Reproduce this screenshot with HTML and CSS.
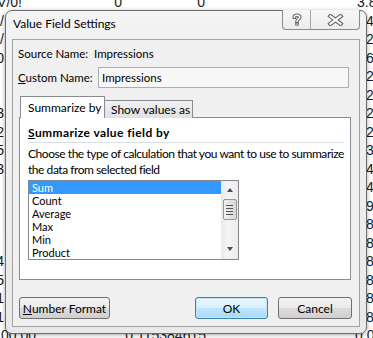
FILE: index.html
```html
<!DOCTYPE html>
<html>
  <head>
    <title>Value Field Settings</title>
    <link rel="stylesheet" href="styles.css">
  </head>
  <body>
    <!-- Spreadsheet behind the dialog (only the visible edges hold values) -->
    <div class="sheet">
      <div class="sheet-row first"><span class="c1">#DIV/0!</span><span class="c2">0</span><span class="c3">0</span><span class="c4">3.846153846</span></div>
      <div class="sheet-row"><span class="c1">/</span><span class="c2"></span><span class="c3"></span><span class="c4">4.1</span></div>
      <div class="sheet-row"><span class="c1">/</span><span class="c2"></span><span class="c3"></span><span class="c4">2.5</span></div>
      <div class="sheet-row"><span class="c1">0</span><span class="c2"></span><span class="c3"></span><span class="c4">6.2</span></div>
      <div class="sheet-row"><span class="c1"></span><span class="c2"></span><span class="c3"></span><span class="c4">2.3</span></div>
      <div class="sheet-row"><span class="c1"></span><span class="c2"></span><span class="c3"></span><span class="c4">2.1</span></div>
      <div class="sheet-row"><span class="c1">3</span><span class="c2"></span><span class="c3"></span><span class="c4">2.7</span></div>
      <div class="sheet-row"><span class="c1">2</span><span class="c2"></span><span class="c3"></span><span class="c4">2.9</span></div>
      <div class="sheet-row"><span class="c1">5</span><span class="c2"></span><span class="c3"></span><span class="c4">3.4</span></div>
      <div class="sheet-row"><span class="c1">3</span><span class="c2"></span><span class="c3"></span><span class="c4">4.6</span></div>
      <div class="sheet-row"><span class="c1"></span><span class="c2"></span><span class="c3"></span><span class="c4">4.2</span></div>
      <div class="sheet-row"><span class="c1"></span><span class="c2"></span><span class="c3"></span><span class="c4">9.1</span></div>
      <div class="sheet-row"><span class="c1"></span><span class="c2"></span><span class="c3"></span><span class="c4">8.3</span></div>
      <div class="sheet-row"><span class="c1"></span><span class="c2"></span><span class="c3"></span><span class="c4">8.5</span></div>
      <div class="sheet-row"><span class="c1">4</span><span class="c2"></span><span class="c3"></span><span class="c4">8.8</span></div>
      <div class="sheet-row"><span class="c1">5</span><span class="c2"></span><span class="c3"></span><span class="c4">8.0</span></div>
      <div class="sheet-row"><span class="c1">1</span><span class="c2"></span><span class="c3"></span><span class="c4">8.6</span></div>
      <div class="sheet-row"><span class="c1">1</span><span class="c2"></span><span class="c3"></span><span class="c4">8.2</span></div>
      <div class="sheet-row last"><span class="c1">00.00</span><span class="c2"></span><span class="c3">0.115384615</span><span class="c4">0.0</span></div>
    </div>

    <!-- The dialog -->
    <div class="dialog">
      <div class="titlebar">
        <span class="title">Value Field Settings</span>
        <div class="caption-btns">
          <span class="cbtn help">
            <svg width="10" height="13" viewBox="0 0 10 13">
              <path d="M2.3 4.2 C2.3 1.6 7.7 1.6 7.7 4.2 C7.7 6.2 5 6 5 8.4" fill="none" stroke="#6a6a6a" stroke-width="3.6" stroke-linecap="square"/>
              <rect x="3.2" y="9.6" width="3.6" height="3" fill="#6a6a6a"/>
              <path d="M2.3 4.2 C2.3 1.6 7.7 1.6 7.7 4.2 C7.7 6.2 5 6 5 8.4" fill="none" stroke="#ffffff" stroke-width="1.4" stroke-linecap="square"/>
              <rect x="4.3" y="10.6" width="1.4" height="1" fill="#ffffff"/>
            </svg>
          </span>
          <span class="cbtn close">
            <svg width="17" height="12" viewBox="0 0 17 12">
              <path d="M3.5 2.2 L13.5 9.8 M13.5 2.2 L3.5 9.8" stroke="#6a6a6a" stroke-width="4.4" stroke-linecap="square"/>
              <path d="M3.5 2.2 L13.5 9.8 M13.5 2.2 L3.5 9.8" stroke="#ffffff" stroke-width="2" stroke-linecap="square"/>
            </svg>
          </span>
        </div>
      </div>

      <div class="client">
        <div class="field-row source">
          <span class="lbl">Source Name:</span>
          <span>Impressions</span>
        </div>
        <div class="field-row custom">
          <label for="custom-name" class="lbl"><u>C</u>ustom Name:</label>
          <input type="text" id="custom-name" value="Impressions" />
        </div>

        <div class="tabs">
          <div class="tab active">Summarize by</div>
          <div class="tab">Show values as</div>
        </div>
        <div class="panel">
          <div class="heading"><u>S</u>ummarize value field by</div>
          <p class="desc">Choose the type of calculation that you want to use to summarize<br>the data from selected field</p>
          <div class="listbox">
            <ul class="items">
              <li class="selected">Sum</li>
              <li>Count</li>
              <li>Average</li>
              <li>Max</li>
              <li>Min</li>
              <li>Product</li>
            </ul>
            <div class="scrollbar">
              <span class="arrow up"></span>
              <span class="thumb"><i></i><i></i><i></i><i></i></span>
              <span class="track"></span>
              <span class="arrow down"></span>
            </div>
          </div>
        </div>

        <div class="buttons">
          <button class="btn number-format"><u>N</u>umber Format</button>
          <span class="spacer"></span>
          <button class="btn ok">OK</button>
          <button class="btn cancel">Cancel</button>
        </div>
      </div>
    </div>
  </body>
</html>
```

FILE: styles.css
```css
/* Page */
body {
  margin: 0;
  width: 373px;
  height: 338px;
  overflow: hidden;
  position: relative;
  background: #ffffff;
  font-family: Lato, "Open Sans", sans-serif;
  font-size: 12px;
  color: #000000;
}

/* Spreadsheet in the background */
.sheet {
  font-family: "Liberation Sans", Arial, sans-serif;
  font-size: 14px;
  color: #1a1a1a;
  margin-top: -7px;
}

.sheet-row {
  display: grid;
  grid-template-columns: 4px 112px 93px 1fr;
  height: 18.5px;
  line-height: 18.5px;
  white-space: nowrap;
}

.sheet-row.first {
  grid-template-columns: 22px 100px 83px 1fr;
}

.sheet-row .c1,
.sheet-row .c2,
.sheet-row .c3 {
  display: flex;
  justify-content: flex-end;
  min-width: 0;
}

.sheet-row .c4 {
  padding-left: 157px;
}

.sheet-row.first .c4 {
  padding-left: 152px;
}

.sheet-row.last {
  grid-template-columns: 36px 60px 110px 1fr;
}

.sheet-row.last .c4 {
  padding-left: 149px;
}

/* Dialog frame */
.dialog {
  position: absolute;
  left: 5px;
  top: 10px;
  width: 362px;
  height: 324px;
  box-sizing: border-box;
  border: 1px solid #6b6b6b;
  border-radius: 7px;
  background: linear-gradient(#f3f3f3, #e9e9e9);
  box-shadow: 0 1px 4px rgba(0, 0, 0, 0.35);
  display: flex;
  flex-direction: column;
  padding: 0 6px 6px 6px;
}

.titlebar {
  height: 28px;
  display: flex;
  justify-content: space-between;
  align-items: flex-start;
}

.title {
  padding-left: 1px;
  margin-top: 3px;
  font-size: 12px;
  line-height: 20px;
}

/* Help and close buttons */
.caption-btns {
  display: flex;
  margin-top: -1px;
  height: 19px;
  border: 1px solid #8a8a8a;
  border-top: none;
  border-radius: 0 0 4px 4px;
  background: linear-gradient(#f7f7f7, #ececec);
}

.cbtn {
  display: flex;
  align-items: center;
  justify-content: center;
}

.cbtn.help {
  width: 27px;
  border-right: 1px solid #a8a8a8;
}

.cbtn.close {
  width: 48px;
}

/* Client area */
.client {
  flex: 1;
  border: 1px solid #a3a3a3;
  background: #f0f0f0;
  padding: 6px 0 0 5px;
  display: flex;
  flex-direction: column;
}

.field-row {
  display: flex;
  align-items: center;
  height: 16px;
  line-height: 16px;
  font-size: 11.5px;
  white-space: nowrap;
}

.field-row .lbl {
  width: 76px;
}

.field-row.custom {
  margin-top: 5px;
  height: 21px;
}

.field-row.custom .lbl {
  width: 80px;
}

.field-row input {
  width: 251px;
  height: 21px;
  box-sizing: border-box;
  border: 1px solid #abadb3;
  background: #f7f7f7;
  font-family: inherit;
  font-size: 11.5px;
  padding: 0 3px;
  margin: 0;
}

/* Tabs */
.tabs {
  display: flex;
  align-items: flex-end;
  margin-top: 8px;
  margin-left: 2px;
  height: 22px;
  position: relative;
  z-index: 1;
  white-space: nowrap;
}

.tab {
  box-sizing: border-box;
  border: 1px solid #898c95;
  border-bottom: none;
  line-height: 17px;
  height: 18px;
  padding: 0 6px;
  background: linear-gradient(#f2f2f2, #e0e0e0);
}

.tab.active {
  height: 22px;
  line-height: 21px;
  width: 85px;
  padding-left: 7px;
  background: #ffffff;
}

.tab + .tab {
  border-left: none;
  width: 88px;
}

.panel {
  margin-top: -1px;
  margin-left: 1px;
  width: 332px;
  height: 163px;
  box-sizing: border-box;
  border: 1px solid #898c95;
  background: #ffffff;
  padding: 7px 6px 0 8px;
}

.heading {
  font-weight: bold;
  letter-spacing: 0.4px;
  line-height: 16px;
  padding-bottom: 1px;
  border-bottom: 1px solid #d5dfe5;
}

.desc {
  margin: 3px 0 0 0;
  line-height: 16px;
  letter-spacing: -0.45px;
  white-space: nowrap;
}

/* List box with scroll bar */
.listbox {
  margin-top: 2px;
  width: 211px;
  height: 80px;
  box-sizing: border-box;
  border: 1px solid #828790;
  display: flex;
}

.items {
  flex: 1;
  list-style: none;
  margin: 0;
  padding: 0;
  font-size: 11px;
}

.items li {
  height: 13px;
  line-height: 13px;
  padding-left: 3px;
}

.items li.selected {
  background: #3399ff;
  color: #ffffff;
}

.scrollbar {
  width: 17px;
  display: flex;
  flex-direction: column;
  align-items: center;
  background: linear-gradient(90deg, #e8e8e8, #f5f5f5 40%, #ececec);
}

.arrow {
  width: 0;
  height: 0;
  border-left: 3.5px solid transparent;
  border-right: 3.5px solid transparent;
}

.arrow.up {
  margin-top: 7px;
  border-bottom: 4px solid #4d4d4d;
}

.arrow.down {
  margin-bottom: 8px;
  border-top: 4px solid #4d4d4d;
}

.thumb {
  margin-top: 7px;
  width: 14px;
  height: 21px;
  box-sizing: border-box;
  border: 1px solid #979797;
  border-radius: 2px;
  background: linear-gradient(90deg, #f2f2f2, #e3e3e3 50%, #d6d6d6);
  display: flex;
  flex-direction: column;
  align-items: center;
  justify-content: center;
  gap: 2px;
}

.thumb i {
  display: block;
  width: 7px;
  height: 1px;
  background: #555555;
}

.track {
  flex: 1;
}

/* Bottom buttons */
.buttons {
  display: flex;
  margin-top: 17px;
  margin-left: 1px;
  margin-right: 7px;
  gap: 10px;
}

.spacer {
  flex: 1;
}

.btn {
  height: 22px;
  box-sizing: border-box;
  border: 1px solid #707070;
  border-radius: 3px;
  background: linear-gradient(#f2f2f2 0%, #ebebeb 48%, #dddddd 52%, #cfcfcf 100%);
  font-family: inherit;
  font-size: 12px;
  color: #000000;
  padding: 0;
  margin: 0;
}

.btn.number-format {
  width: 91px;
}

.btn.ok {
  width: 73px;
  border-color: #3c7fb1;
  box-shadow: inset 0 0 0 1px #c4e5f6;
  background: linear-gradient(#eaf6fd 0%, #d9f0fc 48%, #bee6fd 52%, #a7d9f5 100%);
}

.btn.cancel {
  width: 74px;
}
```
